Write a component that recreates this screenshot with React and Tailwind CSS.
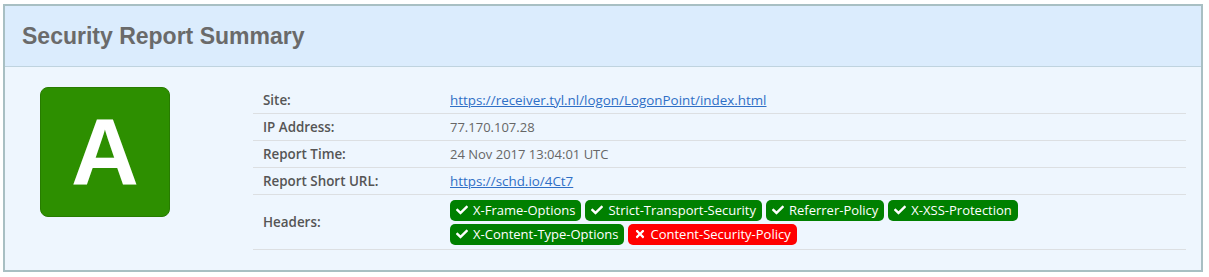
import React from "react";
import { FaCheck, FaTimes } from "react-icons/fa";

const rows = [
  { label: "Site:", value: "https://receiver.tyl.nl/logon/LogonPoint/index.html", link: true },
  { label: "IP Address:", value: "77.170.107.28" },
  { label: "Report Time:", value: "24 Nov 2017 13:04:01 UTC" },
  { label: "Report Short URL:", value: "https://schd.io/4Ct7", link: true },
];

const headers = [
  { name: "X-Frame-Options", ok: true },
  { name: "Strict-Transport-Security", ok: true },
  { name: "Referrer-Policy", ok: true },
  { name: "X-XSS-Protection", ok: true },
  { name: "X-Content-Type-Options", ok: true },
  { name: "Content-Security-Policy", ok: false },
];

function Badge({ name, ok }) {
  return (
    <span
      className={
        "inline-flex items-center h-[21px] rounded-[5px] px-[6px] text-white text-[13px] leading-none " +
        (ok ? "bg-[#008000]" : "bg-[#ff0000]")
      }
    >
      {ok ? (
        <FaCheck className="w-[12px] h-[12px] mr-[5px]" />
      ) : (
        <FaTimes className="w-[12px] h-[12px] mr-[4px]" />
      )}
      {name}
    </span>
  );
}

export default function App() {
  return (
    <div className="w-[1209px] h-[277px] bg-white pt-[4px] pl-[3px]" style={{ fontFamily: "'Open Sans', 'Noto Sans', sans-serif" }}>
      <div className="w-[1200px] h-[268px] border-2 border-[#a8bfc3] bg-[#eef6fe] flex flex-col">
        <div className="h-[61px] bg-[#dbecfd] border-b border-[#bfd3df] flex items-center pl-[17px] shrink-0">
          <h1
            className="text-[23px] font-bold text-[#6a6a6a] leading-none"
            style={{ fontFamily: "'Liberation Sans', Arial, sans-serif" }}
          >
            Security Report Summary
          </h1>
        </div>
        <div className="flex flex-1 pl-[35px] pr-[15px] pt-[20px]">
          <div className="w-[213px] shrink-0">
            <div className="w-[130px] h-[130px] rounded-[8px] bg-[#2d8f00] border border-[#277c00] flex items-center justify-center">
              <span
                className="text-white font-bold text-[94px] leading-none mt-[2px]"
                style={{ fontFamily: "'Liberation Sans', Arial, sans-serif" }}
              >
                A
              </span>
            </div>
          </div>
          <div className="flex-1 text-[13.4px] text-[#555]">
            {rows.map((r) => (
              <div key={r.label} className="flex items-center h-[27px] border-b border-[#dcdfe2]">
                <div className="w-[197px] pl-[10px] font-semibold text-[#555]">{r.label}</div>
                <div>
                  {r.link ? (
                    <a href="#" className="text-[#2f6fc6] underline">{r.value}</a>
                  ) : (
                    <span className="text-[#666] text-[13px]">{r.value}</span>
                  )}
                </div>
              </div>
            ))}
            <div className="flex items-center h-[55px] border-b border-[#dcdfe2]">
              <div className="w-[197px] pl-[10px] font-semibold text-[#555]">Headers:</div>
              <div className="flex flex-wrap gap-x-[4px] gap-y-[3px] w-[600px]">
                {headers.map((h) => (
                  <Badge key={h.name} {...h} />
                ))}
              </div>
            </div>
          </div>
        </div>
      </div>
    </div>
  );
}
